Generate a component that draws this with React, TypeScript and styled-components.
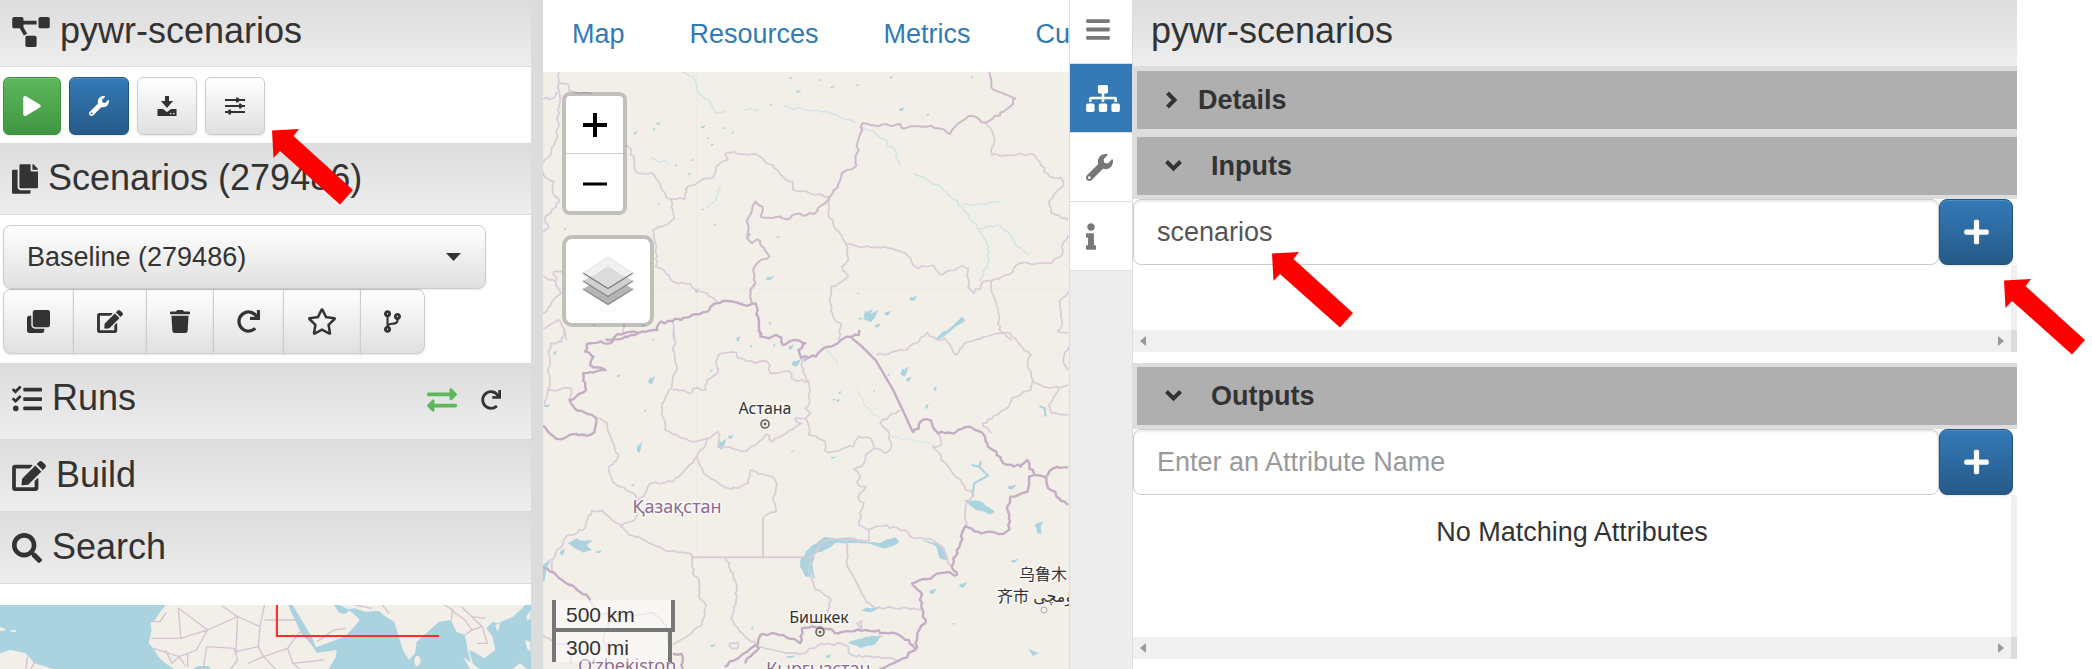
import React from "react";
import styled, { createGlobalStyle, css } from "styled-components";
import {
  FaBars, FaClone, FaCodeBranch, FaCopy, FaEdit, FaExchangeAlt,
  FaInfo, FaPlay, FaPlus, FaProjectDiagram, FaRedo, FaRegStar, FaSearch, FaSitemap, FaTasks,
  FaTrash, FaWrench,
} from "react-icons/fa";

const GlobalStyle = createGlobalStyle`
  *, *::before, *::after { box-sizing: border-box; }
  body {
    margin: 0;
    background: #fff;
    color: #333;
    font-family: "Liberation Sans", Arial, sans-serif;
    font-size: 27px;
    line-height: 38px;
  }
  h2, h3, p { margin: 0; font-weight: 400; }
  button, input, select { font: inherit; color: inherit; margin: 0; }
`;

const Page = styled.div`
  display: grid;
  grid-template-columns: minmax(0, 531fr) 12px minmax(0, 526fr) minmax(0, 948fr) minmax(0, 75fr);
  min-height: 100vh;
`;

const Sidebar = styled.aside`
  display: flex;
  flex-direction: column;
`;

const Splitter = styled.div`
  background: #dcdcdc;
`;

/* Fixed-size box that its icon fills. */
const Glyph = styled.span<{ $w: number; $h: number }>`
  display: block;
  flex: none;
  width: ${(p) => p.$w}px;
  height: ${(p) => p.$h}px;
  svg { display: block; width: 100%; height: 100%; }
`;

const PanelHeading = styled.div<{ $height: number; $top: number; $left?: number }>`
  display: flex;
  align-items: flex-start;
  gap: 10px;
  height: ${(p) => p.$height}px;
  padding: ${(p) => p.$top}px 16px 0 ${(p) => p.$left ?? 12}px;
  border-bottom: 1px solid #ddd;
  background: linear-gradient(#dcdcdc, #eee);
  h2 { font-size: 36px; line-height: 40px; white-space: nowrap; }
  > ${Glyph} { margin-top: 6px; }
`;

const HeadingActions = styled.div`
  display: flex;
  align-items: center;
  gap: 24px;
  height: 40px;
  margin: 2px 14px 0 auto;
`;

const PlainButton = styled.button<{ $color?: string }>`
  display: flex;
  padding: 0;
  border: 0;
  background: none;
  color: ${(p) => p.$color ?? "#333"};
`;

const Toolbar = styled.div`
  display: flex;
  gap: 8px;
  padding: 10px 3px 8px;
`;

const tones = {
  light: css`
    border-color: #ccc;
    background: linear-gradient(#fff, #e0e0e0);
    color: #333;
  `,
  green: css`
    border-color: #3e8f3e;
    background: linear-gradient(#5cb85c, #419641);
    color: #fff;
  `,
  blue: css`
    border-color: #245580;
    background: linear-gradient(#337ab7, #265a88);
    color: #fff;
  `,
};

const Button = styled.button<{ $tone: keyof typeof tones }>`
  display: flex;
  align-items: center;
  justify-content: center;
  height: 58px;
  padding: 0 19px;
  border: 1px solid;
  border-radius: 6px;
  box-shadow: inset 0 1px 0 rgba(255, 255, 255, 0.15), 0 1px 2px rgba(0, 0, 0, 0.1);
  ${(p) => tones[p.$tone]}
`;

const Anchor = styled.div`
  position: relative;
  display: flex;
`;

const ArrowMark = styled.svg<{ $left: number; $top: number }>`
  position: absolute;
  z-index: 5;
  left: ${(p) => p.$left}px;
  top: ${(p) => p.$top}px;
  width: 81px;
  height: 76px;
  pointer-events: none;
`;

const ScenarioTools = styled.div`
  padding: 10px 3px 9px;
`;

const SelectWrap = styled.div`
  position: relative;
  width: 92%;
`;

const Select = styled.select`
  display: block;
  width: 100%;
  height: 64px;
  padding: 0 48px 0 23px;
  appearance: none;
  border: 1px solid #ccc;
  border-radius: 8px;
  background: linear-gradient(#fff, #e0e0e0);
  box-shadow: 0 1px 2px rgba(0, 0, 0, 0.1);
`;

const Caret = styled.svg`
  position: absolute;
  right: 25px;
  top: 28px;
  width: 15px;
  height: 8px;
  pointer-events: none;
`;

const ButtonGroup = styled.div`
  display: flex;
`;

const GroupButton = styled(Button)`
  height: 65px;
  padding: 0 23px;
  border-radius: 0;
  & + & { margin-left: -1px; }
  &:first-child { border-radius: 8px 0 0 8px; }
  &:last-child { border-radius: 0 8px 8px 0; }
`;

const MiniMap = styled.div`
  flex: 1;
  min-height: 64px;
  margin-top: 21px;
  overflow: hidden;
  background: #aad3df;
  svg { display: block; }
`;

const Center = styled.main`
  display: flex;
  flex-direction: column;
  overflow: hidden;
`;

const Tabs = styled.nav`
  display: flex;
  gap: 65px;
  height: 72px;
  padding: 15px 0 0 29px;
  a { color: #337ab7; text-decoration: none; white-space: nowrap; }
`;

const MapCanvas = styled.div`
  position: relative;
  flex: 1;
  overflow: hidden;
  background: #f2efe9;
`;

const MapDrawing = styled.svg`
  position: absolute;
  left: 0;
  top: 0;
`;

const ZoomControl = styled.div`
  position: absolute;
  left: 19px;
  top: 20px;
  width: 65px;
  border: 4px solid rgba(0, 0, 0, 0.2);
  border-radius: 8px;
  background: #fff;
  background-clip: padding-box;
`;

const ZoomButton = styled.button`
  display: flex;
  align-items: center;
  justify-content: center;
  width: 100%;
  height: 57px;
  padding: 0;
  border: 0;
  background: none;
  & + & { height: 58px; border-top: 1px solid #ccc; }
`;

const LayersButton = styled.button`
  position: absolute;
  left: 19px;
  top: 163px;
  display: flex;
  align-items: center;
  justify-content: center;
  width: 92px;
  height: 92px;
  padding: 0;
  border: 4px solid rgba(0, 0, 0, 0.2);
  border-radius: 10px;
  background: #fff;
  background-clip: padding-box;
`;

const ScaleBox = styled.div`
  position: absolute;
  left: 9px;
  bottom: 7px;
  font-size: 21px;
  line-height: 28px;
`;

const ScaleLine = styled.div<{ $width: number }>`
  width: ${(p) => p.$width}px;
  height: 32px;
  padding: 1px 0 0 10px;
  border: 4px solid #777;
  border-top: 0;
  background: rgba(255, 255, 255, 0.5);
  & + & { height: 30px; padding-top: 2px; border-bottom: 0; }
`;

const Inspector = styled.section`
  display: grid;
  grid-template-columns: 64px minmax(0, 1fr);
`;

const Rail = styled.nav`
  overflow: hidden;
  border: solid #ddd;
  border-width: 0 1px;
  background: #ededed;
`;

const RailButton = styled.button<{ $active?: boolean }>`
  display: flex;
  align-items: center;
  width: 100%;
  height: 69px;
  padding: 0 0 0 16px;
  border: 0;
  border-bottom: 1px solid #ddd;
  background: ${(p) => (p.$active ? "#337ab7" : "#fff")};
  color: ${(p) => (p.$active ? "#fff" : "#777")};
  &:first-child { margin-top: -5px; }
`;

const SectionBar = styled.button<{ $gap: number }>`
  display: flex;
  align-items: center;
  gap: ${(p) => p.$gap}px;
  width: 100%;
  height: 66px;
  padding: 0 0 0 28px;
  border: 4px solid #ddd;
  border-right: 0;
  background: #afafaf;
  font-weight: 700;
`;

const AttributeRow = styled.div`
  position: relative;
  display: grid;
  grid-template-columns: minmax(0, 1fr) 74px;
  margin-right: 4px;
  ${Button} { height: 66px; border-radius: 8px; }
`;

const AttributeInput = styled.input`
  width: 100%;
  height: 66px;
  padding: 0 23px;
  border: 1px solid #ccc;
  border-radius: 8px;
  background: #fff;
  box-shadow: inset 0 2px 2px rgba(0, 0, 0, 0.075);
  color: #555;
  &::placeholder { color: #999; opacity: 1; }
`;

const ScrollArea = styled.div<{ $height: number }>`
  height: ${(p) => p.$height}px;
  padding-top: 18px;
  border-right: 6px solid #f0f0f0;
  text-align: center;
`;

const ScrollTrack = styled.div`
  display: flex;
  align-items: center;
  justify-content: space-between;
  height: 22px;
  padding: 0 7px;
  border-right: 6px solid #dcdcdc;
  background: #f0f0f0;
`;

const SectionGap = styled.div`
  height: 11px;
`;

/* Turns a coarse "x y x y" outline into a finely jagged one, as a coast or border looks. */
function rough(points: string, amount = 5): string {
  const n = points.split(" ").map(Number);
  let seed = n.reduce((a, b) => a + b, 7);
  const rand = () => {
    seed = (seed * 9301 + 49297) % 233280;
    return seed / 233280 - 0.5;
  };
  let d = `M${n[0]} ${n[1]}`;
  for (let i = 2; i < n.length; i += 2) {
    const dx = n[i] - n[i - 2];
    const dy = n[i + 1] - n[i - 1];
    const steps = Math.max(1, Math.round(Math.hypot(dx, dy) / 11));
    for (let k = 1; k <= steps; k++) {
      const j = k === steps ? 0 : amount;
      d += `L${(n[i - 2] + (dx * k) / steps + rand() * j).toFixed(1)} ${(n[i - 1] + (dy * k) / steps + rand() * j).toFixed(1)}`;
    }
  }
  return d;
}

const northThin = [
  "70 217 66 260 72 290 66 330 70 375 60 420 48 460 35 475 23 490",
  "23 297 55 293 65 275", "70 250 95 252 98 272 165 280",
  "23 515 35 535 55 545 52 580 70 605 45 640 30 650 28 665 40 680 23 697",
  "263 437 280 450 292 515 345 523 365 560 390 597 435 597 437 567 480 543 520 527 525 500 560 480 552 465 570 458 610 463 650 468 690 495 720 530 748 545 750 570 790 575 855 590",
  "395 597 405 655 370 680 342 690 350 750 355 768 350 800 380 820 400 845 450 850 468 870 500 880 530 905",
  "1308 368 1333 410 1327 465 1370 467 1445 462 1495 530 1527 532 1535 555 1492 605 1500 640 1548 660",
  "855 592 852 645 875 690 902 730 910 780 890 800 910 830 860 860 855 900 865 950 887 970 882 1020",
  "902 730 930 737 1015 740 1075 760 1108 803 1158 797 1175 823 1205 812 1240 797 1258 805 1257 860 1275 880 1300 845 1325 842 1375 825 1405 790 1450 793 1490 790 1525 770 1530 740 1548 705",
  "1325 842 1335 900 1345 940 1348 990 1385 1020",
  "1548 875 1522 905 1530 960 1518 995 1548 1000",
  "80 815 55 815 60 845 23 830", "60 845 75 880 50 905 23 940",
  "23 985 70 960 85 1000 90 1020", "258 970 255 1005", "400 965 405 1020",
];
const northMid = [
  "1320 217 1325 262 1365 283 1395 295 1380 320 1330 355 1308 368 1260 347 1215 385 1205 402 1150 377 1065 385 1060 372 1040 378 950 370 945 400 937 425 932 498 890 520 880 560 855 592 810 642 748 645 740 655 655 650 660 620 640 605 630 630 615 665 622 705 615 715 630 730 645 718 680 770 650 785 635 805 640 850 625 870 630 910",
];
const northThick = [
  "205 1018 240 1018 300 1000 355 990 360 970 400 963 500 935 510 920 545 903 575 905 605 915 640 910 650 960 655 1010",
];
const southThick = [
  "300 8 240 12 225 35 150 42 145 65 170 80 160 105 205 120 140 130 148 180 100 210 115 235 175 262 172 308 150 317 100 315 75 328 45 312 23 287",
  "648 0 655 20 680 25 700 15 715 22 720 45 750 30 785 40 765 60 772 82 815 80 830 62 870 45 905 20 940 15 942 0",
  "1098 308 1130 268 1150 272 1170 310 1220 308 1260 290 1300 310 1315 350 1340 365 1360 400 1410 410 1430 390 1450 435 1480 442 1505 415 1548 412",
  "1485 442 1490 475 1548 525",
  "1450 435 1435 440 1430 485 1380 500 1372 540 1378 598 1345 612 1285 605 1250 588 1210 710 1225 735 1190 728 1095 760 1118 785 1133 880 1110 910 1105 960 1060 990 1000 1017",
  "1105 960 1085 930 1040 908 950 902 880 910 830 890 775 895 770 940 720 915 660 912 640 945 590 985 550 1010",
  "640 945 650 955 610 1000", "23 712 70 745 150 795 160 815", "400 972 425 972 430 1017",
];
const southThin = [
  "85 0 78 35 45 40 38 180 105 175 100 210", "38 180 30 225",
  "400 0 408 40 400 60 412 120 400 140 397 175 368 230 378 300 455 335 500 325 530 305 535 350 565 350 600 365 640 345 672 312 690 335 775 280 755 268 785 265 800 250 785 235 798 215 795 155 745 145 740 125 685 132 675 95 640 100 590 85 585 68 540 70 525 95 530 130 500 150 495 180 460 175 455 188 400 180",
  "772 82 780 130 795 155",
  "785 265 798 300 795 315 835 330 850 368 925 350 940 320 975 325 985 355 1022 368 1035 345 1030 315 1002 278 1060 240",
  "500 325 495 345 470 380 435 420 400 455 335 460 320 490 297 510 295 560 250 590 265 605 390 665 450 670 460 682",
  "175 262 210 280 215 310 243 375 215 410 225 455 285 490 297 510",
  "470 380 490 430 540 465 570 477 620 460 625 420 650 432 690 440 702 465 692 500 700 545 665 560",
  "250 590 195 542 165 542 140 600 90 620 50 690 50 725",
  "455 680 458 730 475 745 475 800 497 825 485 885 400 945",
  "552 682 575 740 587 800 570 865 610 920 650 950",
  "985 355 960 375 955 400 925 418 942 435 938 465 962 470 938 500 955 520 940 585 975 597 1010 588 1075 600 1090 620 1155 632 1180 650 1210 710",
  "800 682 830 640 860 628 970 632 968 597", "800 682 795 720 810 770 860 810 850 850 800 885",
  "905 640 907 710 935 760 960 810 990 835 1100 835 1120 840",
  "990 75 1080 60 1140 8 1155 20 1170 30 1190 25 1220 75 1260 35 1350 10 1380 10 1440 75 1430 105 1445 150 1440 180 1385 205 1370 235 1300 280 1325 310",
  "1445 150 1475 170 1520 172 1495 220 1500 250 1548 255", "1520 172 1548 165", "1548 50 1535 100 1548 120",
  "1170 310 1180 345 1155 350 1195 405 1240 460 1250 480 1275 495 1250 530 1250 588",
  "23 915 60 940 100 940 105 1000", "160 815 190 855 290 855 345 848 380 885 390 940", "220 870 200 920 215 1000",
  "650 950 730 970 780 970 830 940 900 945 920 975 1060 990",
  "565 940 590 938 588 955 570 955 562 942", "950 905 935 880 950 872 945 900",
];
const rivers = [
  "430 217 460 230 475 280 505 300 525 342 555 330", "605 330 650 330", "720 320 780 330 840 335 880 350 930 368",
  "950 380 1000 410 1045 450 1060 500", "1100 520 1170 555 1240 620 1285 685 1318 740 1315 790 1290 845",
  "1240 615 1350 607", "1285 685 1340 675 1375 695 1400 740 1435 765", "335 472 385 490", "538 555 525 600 500 625",
];

type Blob = [number, number, number, number];
const northLakes: Blob[] = [
  [742, 234, 5, 4], [765, 274, 8, 5], [864, 261, 6, 5], [685, 314, 5, 4], [1065, 327, 8, 7], [1141, 344, 5, 4], [292, 398, 5, 6],
  [346, 387, 5, 5], [358, 370, 6, 5], [488, 380, 8, 5], [515, 434, 5, 4], [458, 480, 5, 4], [410, 496, 5, 4], [448, 522, 5, 4],
  [440, 566, 6, 5], [487, 628, 5, 3], [523, 674, 4, 4], [619, 703, 9, 5], [705, 711, 5, 4], [682, 834, 13, 7], [470, 872, 6, 8],
  [600, 909, 5, 5], [683, 969, 5, 5], [590, 1014, 6, 6], [975, 948, 22, 18], [967, 940, 14, 14], [1024, 939, 10, 8], [995, 976, 9, 7], [1098, 895, 12, 8],
  [945, 955, 7, 4], [938, 880, 5, 3], [88, 687, 4, 4], [359, 611, 4, 4], [827, 240, 4, 5], [937, 255, 5, 4], [1269, 230, 4, 4],
  [1034, 232, 5, 4], [574, 397, 4, 4], [550, 384, 5, 4], [503, 414, 4, 4], [172, 974, 5, 3], [315, 975, 5, 4],
];
const southLakes: Blob[] = [
  [758, 98, 14, 12], [785, 87, 8, 8], [743, 51, 8, 9], [695, 45, 5, 5], [1073, 124, 12, 16], [1085, 147, 8, 8], [885, 187, 5, 5],
  [880, 211, 6, 5], [868, 208, 4, 4], [338, 150, 10, 14], [320, 242, 4, 4], [303, 352, 8, 18], [542, 342, 14, 17], [568, 320, 9, 7],
  [285, 465, 5, 4], [748, 363, 6, 3], [866, 382, 9, 4], [1384, 471, 14, 8], [1155, 783, 11, 9], [1243, 764, 12, 9], [517, 946, 8, 6],
  [742, 980, 15, 4], [853, 978, 8, 7], [975, 838, 28, 9], [590, 28, 5, 8], [628, 48, 4, 5], [80, 665, 8, 12], [185, 665, 9, 5],
  [142, 312, 5, 4], [343, 28, 4, 4], [512, 122, 5, 4], [1027, 134, 4, 4], [985, 182, 4, 3], [243, 137, 6, 5], [58, 68, 5, 8],
  [35, 227, 10, 5], [1392, 692, 11, 6], [1215, 881, 5, 3], [631, 895, 4, 6], [1138, 228, 5, 10], [1162, 175, 5, 9],
];

const Lakes = ({ items }: { items: Blob[] }) => (
  <g fill="#aad3df">
    {items.map(([x, y, rx, ry]) => (
      <path key={`${x}-${y}`} d={`M${x - rx} ${y + ry / 2}L${x - rx / 2} ${y - ry / 2}L${x} ${y - ry / 3}L${x + rx} ${y - ry}L${x + rx / 2} ${y + ry / 3}L${x} ${y + ry}Z`} />
    ))}
  </g>
);

const Borders = ({ lines, color, width }: { lines: string[]; color: string; width: number }) => (
  <g fill="none" stroke={color} strokeWidth={width} strokeLinejoin="round">
    {lines.map((l) => <path key={l} d={rough(l, 9)} />)}
  </g>
);

const halo = { paintOrder: "stroke", stroke: "#faf8f4", strokeWidth: 3, strokeLinejoin: "round" } as const;

const CityDot = ({ x, y }: { x: number; y: number }) => (
  <g fill="#f2efe9" stroke="#66665a">
    <circle cx={x} cy={y} r="4" strokeWidth="1.6" />
    <circle cx={x} cy={y} r="1" strokeWidth="1" fill="#444" />
  </g>
);

const RegionMap = () => (
  <MapDrawing width="526" height="597" viewBox="0 0 526 597" role="img" aria-label="Map of Kazakhstan">
    <g transform="translate(-8 -72) scale(0.3444 0.3333)">
      <path d="M470 217V1020M23 867H1548" stroke="#ece8e2" strokeWidth="3" />
      <Borders lines={rivers} color="#cfe3e6" width={4} />
      <Lakes items={northLakes} />
      <path d="M1170 1018L1215 975L1240 950L1250 962L1215 985L1185 1012Z" fill="#aad3df" />
      <Borders lines={northThin} color="#dacbd7" width={5} />
      <Borders lines={northMid} color="#cebacb" width={6} />
      <Borders lines={northThick} color="#c4adc2" width={7} />
    </g>
    <g transform="translate(-8 258) scale(0.3444 0.3333)">
      <path d="M470 0V680" stroke="#ece8e2" strokeWidth="3" />
      <Borders lines={["935 170 960 230 1000 260", "1035 320 1100 330 1160 345", "830 40 880 105"]} color="#d5e5e7" width={3} />
      <g fill="#aad3df">
        <path d={rough("770 690 800 650 840 620 870 625 910 622 960 635 1000 640 1020 628 1045 622 1058 635 1040 648 1010 655 975 643 915 638 870 640 840 660 812 675 805 700 800 740 785 740 770 710")} />
        <path d={rough("1125 630 1165 640 1190 655 1200 690 1175 685 1165 650 1125 630")} />
        <path d={rough("908 938 960 920 1010 918 985 945 945 955 908 938")} />
        <path d={rough("1245 510 1290 512 1335 545 1325 553 1280 540 1245 510")} />
        <path d={rough("95 640 120 625 140 632 170 630 150 645 165 660 140 668 115 655 95 640")} />
        <path d="M23 755L22 705L48 685L35 712L27 755Z" />
        <path d={rough("1450 585 1475 575 1468 590 1470 612 1460 610 1450 585")} />
        <path d={rough("1432 957 1465 968 1445 978 1432 957")} />
      </g>
      <path d="M1268 405L1290 410L1315 437L1275 460L1270 500M1290 410L1295 395M810 745L800 700M1465 228L1480 235L1482 260M1165 30L1185 8L1205 2" fill="none" stroke="#aad3df" strokeWidth="6" />
      <Lakes items={southLakes} />
      <Borders lines={southThin} color="#dacbd7" width={5} />
      <path d="M662 560V682M458 682H800" fill="none" stroke="#d8c8d5" strokeWidth="5" />
      <Borders lines={southThick} color="#c4adc2" width={7} />
      <path d="M920 25L950 50L990 92L1040 180L1065 235L1098 308" fill="none" stroke="#c4adc2" strokeWidth="7" />
    </g>
    <g fontFamily='"Noto Sans", "Noto Sans CJK SC", "DejaVu Sans", sans-serif' fontSize="16" fill="#333">
      <text x="222" y="342" textAnchor="middle" {...halo}>Астана</text>
      <CityDot x={222} y={352} />
      <text x="276" y="551" textAnchor="middle" {...halo}>Бишкек</text>
      <CityDot x={277} y={560} />
      <text x="476" y="508" {...halo}>乌鲁木</text>
      <text x="454" y="530" {...halo}>齐市 ئۈرۈمچى</text>
      <circle cx="501" cy="538" r="3" fill="none" stroke="#aaa" />
      <g fill="#8d6b92" fontSize="18">
        <text x="134" y="441" textAnchor="middle" {...halo}>Қазақстан</text>
        <text x="35" y="600" {...halo}>O‘zbekiston</text>
        <text x="223" y="603" {...halo}>Кыргызстан</text>
      </g>
    </g>
  </MapDrawing>
);

const OverviewMap = () => (
  <svg width="531" height="64" viewBox="0 0 531 64" preserveAspectRatio="xMinYMin slice" role="img" aria-label="Overview map">
    <g transform="scale(0.3444 0.3333) translate(0 -525)">
      <g fill="#f2efe9">
        <path d="M482 525L465 545L450 570L437 578L440 600L432 640L445 655L460 680L480 700L505 717H560L575 708L605 708L612 717H955L975 680L978 660L920 668L905 645L870 600L845 545L838 525Z" />
        <path d="M850 525L870 560L905 620L918 652L1000 620L1020 600L1045 570L1025 550L1015 542L1000 552L985 548L970 525Z" />
        <path d="M985 525L1010 537L1030 535L1060 545L1100 543L1120 560L1145 575L1155 610L1170 660L1187 690L1205 670L1210 635L1275 575L1310 570L1325 605L1350 615L1358 660L1372 717L1378 717L1362 660L1380 668L1405 685L1438 660L1430 620L1412 595L1430 575L1445 580L1490 560L1520 530L1525 525Z" />
        <ellipse cx="1212" cy="693" rx="9" ry="15" />
        <path d="M0 670L30 660L75 670L100 700L155 717H0ZM1345 682L1365 695L1392 717H1365ZM1488 717L1510 700L1530 717ZM1528 560L1540 540V565L1532 572ZM1438 585L1452 580L1445 605ZM0 590L20 600L0 604ZM32 600H46V606H32ZM1525 630L1540 635V665L1530 655Z" />
      </g>
      <g fill="none" stroke="#d5c3d3" strokeWidth="4">
        <path d="M518 535L603 600L525 625L440 625M518 535L525 625M482 548L465 575L437 575M603 600L690 560L645 528M690 560L755 590L768 525M768 570H860M755 590L750 650L685 665L690 560M603 600L570 660L520 680L445 655M600 650L680 655L690 690L670 717M600 650L590 717M750 650L765 680L835 655L870 605M765 680L720 700M765 680L800 717M835 655L850 700L870 717M870 605L905 640M850 700L940 690M480 660L500 700L520 680L540 710M545 670V710" />
        <path d="M920 635L970 600L1005 595M1030 525L1080 535M1110 525L1130 550M1310 570L1315 540L1290 525M1310 540L1350 570L1370 600L1350 615M1370 600L1400 590L1415 640L1385 640M1370 560L1400 590M1340 530L1370 560L1410 565M80 680L75 717M100 695L90 717" />
      </g>
      <path d="M804 520V618H1275" fill="none" stroke="#ff2a2a" strokeWidth="6" />
    </g>
  </svg>
);

const Arrow = ({ left, top }: { left: number; top: number }) => (
  <ArrowMark $left={left} $top={top} viewBox="0 0 81 76" aria-hidden="true">
    <path fill="#f00" d="M0 1.5L27 0L21.5 7L81 61L68 75.5L8 22L1.5 29Z" />
  </ArrowMark>
);

const DownloadIcon = () => (
  <svg viewBox="0 0 20 20" fill="currentColor" aria-hidden="true">
    <path d="M8 0h4v5h4l-6 7-6-7h4z" />
    <path d="M.5 13H6l4 3 4-3h5.500v7H.5z" />
    <path d="M13 17h1.500v1.300H13zM16 17h1.500v1.300H16z" fill="#eee" />
  </svg>
);

const SlidersIcon = () => (
  <svg viewBox="0 0 20 20" fill="currentColor" aria-hidden="true">
    <path d="M0 3h20v2H0zM0 9h20v2H0zM0 15h20v2H0z" />
    <path d="M11 1.500h2l2 2.500-2 2.500h-2zM14 7.500h2l2 2.500-2 2.500h-2zM6 13.500h-2l-2 2.500 2 2.500h2z" />
  </svg>
);

const ChevronRight = () => (
  <svg viewBox="0 0 13 18" fill="none" stroke="currentColor" strokeWidth="4" aria-hidden="true">
    <path d="M2.500 2L9.500 9L2.500 16" />
  </svg>
);

const ChevronDown = () => (
  <svg viewBox="0 0 17 18" fill="none" stroke="currentColor" strokeWidth="4" aria-hidden="true">
    <path d="M1.500 4.500L8.500 11.500L15.500 4.500" />
  </svg>
);

const LayersIcon = () => (
  <svg width="52" height="52" viewBox="0 0 52 52" aria-hidden="true">
    <path d="M1 34L26 19L51 34L26 50Z" fill="#b5b5b5" />
    <path d="M1 34L26 49.500L51 34" fill="none" stroke="#888" strokeWidth="1.300" />
    <path d="M1 26L26 11L51 26L26 42Z" fill="#d0d0d0" />
    <path d="M1 26L26 41.500L51 26" fill="none" stroke="#888" strokeWidth="1.300" />
    <path d="M1 18L26 2L51 18L26 34Z" fill="#f0f0f0" />
    <path d="M9 22L26 11L43 22L26 33Z" fill="#dcdcdc" />
    <path d="M1 18L26 33.500L51 18" fill="none" stroke="#777" strokeWidth="1.400" />
    <path d="M1 18L26 2L51 18" fill="none" stroke="#e2e2e2" />
  </svg>
);

const Triangle = ({ right }: { right?: boolean }) => (
  <svg width="6" height="10" viewBox="0 0 6 10" aria-hidden="true">
    <path d={right ? "M0 0L6 5L0 10Z" : "M6 0L0 5L6 10Z"} fill="#999" />
  </svg>
);

const TrackBar = () => (
  <ScrollTrack>
    <Triangle />
    <Triangle right />
  </ScrollTrack>
);

const scenarioActions = [
  { label: "Clone scenario", icon: <FaClone />, w: 23, h: 23 },
  { label: "Edit scenario", icon: <FaEdit />, w: 26, h: 23 },
  { label: "Delete scenario", icon: <FaTrash />, w: 20, h: 23 },
  { label: "Reload scenario", icon: <FaRedo />, w: 23, h: 23 },
  { label: "Mark as favourite", icon: <FaRegStar />, w: 30, h: 27 },
  { label: "Branch scenario", icon: <FaCodeBranch />, w: 17, h: 23 },
];

export default function App() {
  return (
    <>
      <GlobalStyle />
      <Page>
        <Sidebar>
          <PanelHeading $height={67} $top={11}>
            <Glyph $w={38} $h={30}><FaProjectDiagram /></Glyph>
            <h2>pywr-scenarios</h2>
          </PanelHeading>
          <Toolbar>
            <Button $tone="green" aria-label="Run"><Glyph $w={18} $h={20}><FaPlay /></Glyph></Button>
            <Button $tone="blue" aria-label="Configure"><Glyph $w={20} $h={20}><FaWrench /></Glyph></Button>
            <Button $tone="light" aria-label="Download"><Glyph $w={20} $h={20}><DownloadIcon /></Glyph></Button>
            <Anchor>
              <Button $tone="light" aria-label="Options"><Glyph $w={20} $h={20}><SlidersIcon /></Glyph></Button>
              <Arrow left={67} top={52} />
            </Anchor>
          </Toolbar>
          <PanelHeading $height={72} $top={15}>
            <Glyph $w={26} $h={30}><FaCopy /></Glyph>
            <h2>Scenarios (279486)</h2>
          </PanelHeading>
          <ScenarioTools>
            <SelectWrap>
              <Select aria-label="Scenario" defaultValue="279486">
                <option value="279486">Baseline (279486)</option>
              </Select>
              <Caret viewBox="0 0 15 8" aria-hidden="true"><path d="M0 0H15L7.500 8Z" fill="#333" /></Caret>
            </SelectWrap>
            <ButtonGroup>
              {scenarioActions.map((a) => (
                <GroupButton key={a.label} $tone="light" aria-label={a.label}>
                  <Glyph $w={a.w} $h={a.h}>{a.icon}</Glyph>
                </GroupButton>
              ))}
            </ButtonGroup>
          </ScenarioTools>
          <PanelHeading $height={77} $top={15}>
            <Glyph $w={30} $h={30}><FaTasks /></Glyph>
            <h2>Runs</h2>
            <HeadingActions>
              <PlainButton $color="#5cb85c" aria-label="Compare runs"><Glyph $w={30} $h={30}><FaExchangeAlt /></Glyph></PlainButton>
              <PlainButton aria-label="Reload runs"><Glyph $w={20} $h={20}><FaRedo /></Glyph></PlainButton>
            </HeadingActions>
          </PanelHeading>
          <PanelHeading $height={72} $top={15}>
            <Glyph $w={34} $h={30}><FaEdit /></Glyph>
            <h2>Build</h2>
          </PanelHeading>
          <PanelHeading $height={72} $top={15}>
            <Glyph $w={30} $h={30}><FaSearch /></Glyph>
            <h2>Search</h2>
          </PanelHeading>
          <MiniMap><OverviewMap /></MiniMap>
        </Sidebar>

        <Splitter />

        <Center>
          <Tabs>
            <a href="#map">Map</a>
            <a href="#resources">Resources</a>
            <a href="#metrics">Metrics</a>
            <a href="#custom">Custom</a>
          </Tabs>
          <MapCanvas>
            <RegionMap />
            <ZoomControl>
              <ZoomButton aria-label="Zoom in">
                <svg width="24" height="24" viewBox="0 0 24 24"><path d="M0 12H24M12 0V24" stroke="#000" strokeWidth="4" /></svg>
              </ZoomButton>
              <ZoomButton aria-label="Zoom out">
                <svg width="24" height="24" viewBox="0 0 24 24"><path d="M0 13H24" stroke="#000" strokeWidth="3" /></svg>
              </ZoomButton>
            </ZoomControl>
            <LayersButton aria-label="Layers"><LayersIcon /></LayersButton>
            <ScaleBox>
              <ScaleLine $width={123}>500 km</ScaleLine>
              <ScaleLine $width={120}>300 mi</ScaleLine>
            </ScaleBox>
          </MapCanvas>
        </Center>

        <Inspector>
          <Rail>
            <RailButton aria-label="Menu"><Glyph $w={24} $h={27}><FaBars /></Glyph></RailButton>
            <RailButton $active aria-label="Network"><Glyph $w={34} $h={27}><FaSitemap /></Glyph></RailButton>
            <RailButton aria-label="Tools"><Glyph $w={27} $h={27}><FaWrench /></Glyph></RailButton>
            <RailButton aria-label="Information"><Glyph $w={10} $h={27}><FaInfo /></Glyph></RailButton>
          </Rail>
          <div>
            <PanelHeading $height={67} $top={11} $left={18}>
              <h2>pywr-scenarios</h2>
            </PanelHeading>
            <SectionBar $gap={20} aria-expanded="false"><Glyph $w={13} $h={18}><ChevronRight /></Glyph>Details</SectionBar>
            <SectionBar $gap={29} aria-expanded="true"><Glyph $w={17} $h={18}><ChevronDown /></Glyph>Inputs</SectionBar>
            <AttributeRow>
              <AttributeInput aria-label="Input attribute" defaultValue="scenarios" />
              <Button $tone="blue" aria-label="Add input"><Glyph $w={25} $h={28}><FaPlus /></Glyph></Button>
              <Arrow left={139} top={53} />
              <Arrow left={871} top={80} />
            </AttributeRow>
            <ScrollArea $height={65} />
            <TrackBar />
            <SectionGap />
            <SectionBar $gap={29} aria-expanded="true"><Glyph $w={17} $h={18}><ChevronDown /></Glyph>Outputs</SectionBar>
            <AttributeRow>
              <AttributeInput aria-label="Output attribute" placeholder="Enter an Attribute Name" />
              <Button $tone="blue" aria-label="Add output"><Glyph $w={25} $h={28}><FaPlus /></Glyph></Button>
            </AttributeRow>
            <ScrollArea $height={142}>
              <p>No Matching Attributes</p>
            </ScrollArea>
            <TrackBar />
          </div>
        </Inspector>
      </Page>
    </>
  );
}
